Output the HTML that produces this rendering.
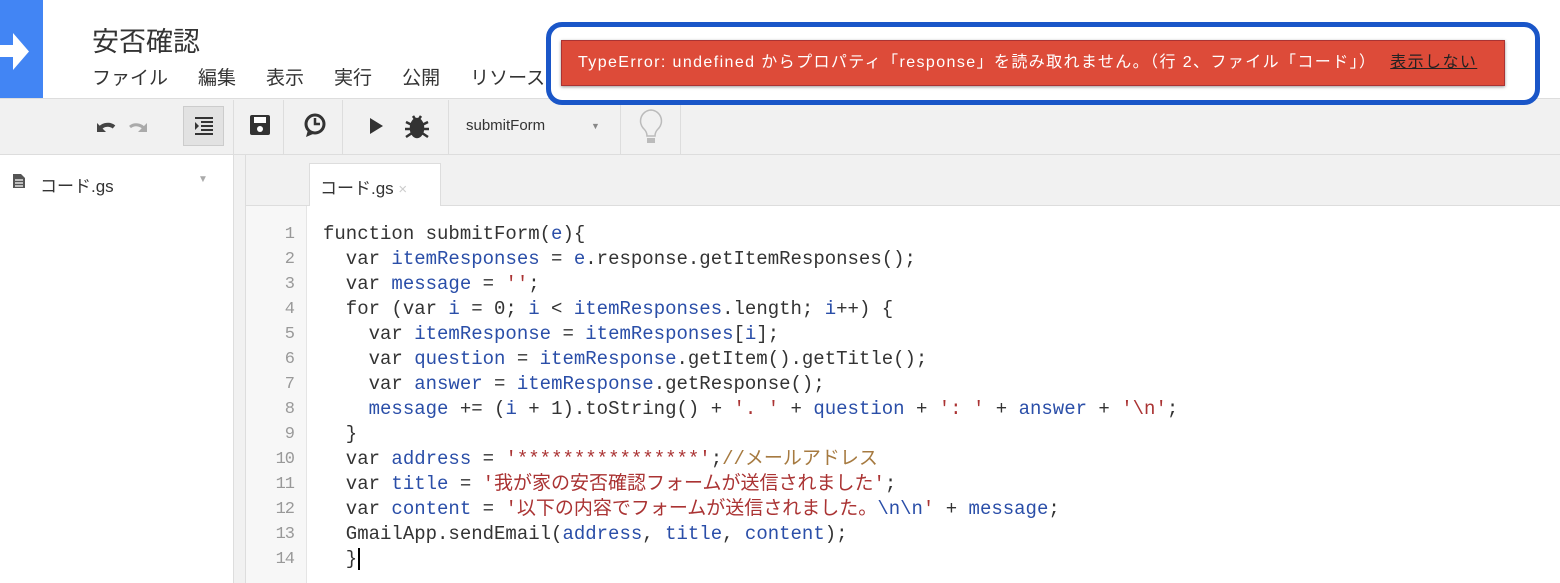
<!DOCTYPE html>
<html><head><meta charset="utf-8"><style>
body{margin:0;width:1560px;height:583px;overflow:hidden;background:#fff;font-family:"Liberation Sans","Noto Sans CJK JP",sans-serif;position:relative}
.abs{position:absolute}
.code{position:absolute;left:323px;top:222px;font-family:"Liberation Mono","Noto Sans CJK JP",monospace;font-size:19px;line-height:25px;color:#333;white-space:pre}
.nums{position:absolute;left:262px;top:222px;width:32px;text-align:right;font-family:"Liberation Mono",monospace;font-size:17px;letter-spacing:-1px;line-height:25px;color:#999;white-space:pre}
.v{color:#2a4ea8}.s{color:#a33}.c{color:#a67a40}
.menu span{margin-right:30px}
</style></head><body>
<!-- logo -->
<div class="abs" style="left:0;top:0;width:43px;height:98px;background:#4285f4"></div>
<svg class="abs" style="left:0;top:30px" width="40" height="45"><path d="M0 15h13V3l16 18.5L13 40V27H0z" fill="#fff"/></svg>
<div class="abs" style="left:92px;top:20px;font-size:27px;color:#333">安否確認</div>
<div class="abs menu" style="left:92px;top:63px;font-size:19px;color:#333;white-space:nowrap"><span>ファイル</span><span>編集</span><span>表示</span><span>実行</span><span>公開</span><span>リソース</span></div>
<!-- toolbar -->
<div class="abs" style="left:0;top:98px;width:1560px;height:57px;background:#f1f1f1;border-top:1px solid #ddd;border-bottom:1px solid #ddd;box-sizing:border-box"></div>
<div class="abs" style="left:183px;top:106px;width:41px;height:40px;background:#e2e2e2;border:1px solid #ccc;box-sizing:border-box"></div>
<div class="abs" style="left:233px;top:100px;width:1px;height:54px;background:#ddd"></div>
<div class="abs" style="left:283px;top:100px;width:1px;height:54px;background:#ddd"></div>
<div class="abs" style="left:342px;top:100px;width:1px;height:54px;background:#ddd"></div>
<div class="abs" style="left:448px;top:100px;width:1px;height:54px;background:#ddd"></div>
<div class="abs" style="left:620px;top:100px;width:1px;height:54px;background:#ddd"></div>
<div class="abs" style="left:680px;top:100px;width:1px;height:54px;background:#ddd"></div>
<svg class="abs" style="left:95px;top:113px" width="70" height="26"><path d="M4 18a9 8 0 0 1 15-4" stroke="#444" stroke-width="4" fill="none"/><path d="M2 10v9h9z" fill="#444"/><path d="M50 18a9 8 0 0 0-15-4" stroke="#aaa" stroke-width="3" fill="none"/><path d="M52 10v9h-9z" fill="#aaa"/></svg>
<svg class="abs" style="left:193px;top:116px" width="22" height="20" fill="#333"><rect x="2" y="1" width="18" height="2"/><rect x="8" y="5" width="12" height="2"/><rect x="8" y="9" width="12" height="2"/><rect x="8" y="13" width="12" height="2"/><rect x="2" y="17" width="18" height="2"/><path d="M2 6l4 4-4 4z"/></svg>
<svg class="abs" style="left:249px;top:114px" width="22" height="22"><rect x="1" y="1" width="20" height="20" rx="2" fill="#333"/><rect x="5" y="3" width="12" height="6" fill="#fff"/><circle cx="11" cy="15" r="3" fill="#fff"/></svg>
<svg class="abs" style="left:302px;top:112px" width="26" height="28"><circle cx="13" cy="12" r="9" fill="none" stroke="#333" stroke-width="3"/><path d="M13 6v6h5" stroke="#333" stroke-width="2.5" fill="none"/><path d="M6 18l-2 7 7-3" fill="#333"/></svg>
<svg class="abs" style="left:368px;top:116px" width="16" height="20"><path d="M2 2l13 8-13 8z" fill="#333"/></svg>
<svg class="abs" style="left:402px;top:110px" width="30" height="32" stroke="#333" stroke-width="2.5"><ellipse cx="15" cy="18" rx="6" ry="9" fill="#333"/><path d="M4 12l6 3M26 12l-6 3M3 19h7M27 19h-7M4 27l6-4M26 27l-6-4M11 6l2 3M19 6l-2 3"/></svg>
<div class="abs" style="left:466px;top:117px;font-size:15px;color:#333">submitForm</div>
<div class="abs" style="left:591px;top:121px;font-size:9px;color:#888">▼</div>
<svg class="abs" style="left:637px;top:108px" width="28" height="38"><path d="M14 2a11 11 0 0 0-7 19c2 2 3 4 3 7h8c0-3 1-5 3-7A11 11 0 0 0 14 2z" fill="none" stroke="#bbb" stroke-width="1.5"/><rect x="10" y="30" width="8" height="5" fill="#bbb"/></svg>
<!-- sidebar -->
<div class="abs" style="left:0;top:155px;width:233px;height:428px;background:#fff;border-right:1px solid #ddd"></div>
<div class="abs" style="left:234px;top:155px;width:11px;height:428px;background:#f1f1f1;border-right:1px solid #ddd"></div>
<svg class="abs" style="left:12px;top:173px" width="14" height="16"><path d="M1 1h8l4 4v10H1z" fill="#555"/><path d="M3 7h8M3 10h8M3 13h8" stroke="#fff" stroke-width="1.2"/></svg>
<div class="abs" style="left:40px;top:172px;font-size:17px;color:#333">コード.gs</div>
<div class="abs" style="left:198px;top:174px;font-size:10px;color:#aaa">▼</div>
<!-- editor tabs -->
<div class="abs" style="left:246px;top:155px;width:1314px;height:50px;background:#f1f1f1;border-bottom:1px solid #ddd"></div>
<div class="abs" style="left:309px;top:163px;width:132px;height:43px;background:#fff;border:1px solid #ddd;border-bottom:none;box-sizing:border-box"></div>
<div class="abs" style="left:320px;top:174px;font-size:17px;color:#333">コード.gs <span style="color:#ccc;font-size:15px">×</span></div>
<!-- gutter -->
<div class="abs" style="left:246px;top:206px;width:60px;height:377px;background:#f7f7f7;border-right:1px solid #e5e5e5"></div>
<div class="nums">1
2
3
4
5
6
7
8
9
10
11
12
13
14</div>
<div class="code">function submitForm(<span class="v">e</span>){
  var <span class="v">itemResponses</span> = <span class="v">e</span>.response.getItemResponses();
  var <span class="v">message</span> = <span class="s">''</span>;
  for (var <span class="v">i</span> = 0; <span class="v">i</span> &lt; <span class="v">itemResponses</span>.length; <span class="v">i</span>++) {
    var <span class="v">itemResponse</span> = <span class="v">itemResponses</span>[<span class="v">i</span>];
    var <span class="v">question</span> = <span class="v">itemResponse</span>.getItem().getTitle();
    var <span class="v">answer</span> = <span class="v">itemResponse</span>.getResponse();
    <span class="v">message</span> += (<span class="v">i</span> + 1).toString() + <span class="s">'. '</span> + <span class="v">question</span> + <span class="s">': '</span> + <span class="v">answer</span> + <span class="s">'\n'</span>;
  }
  var <span class="v">address</span> = <span class="s">'****************'</span>;<span class="c">//メールアドレス</span>
  var <span class="v">title</span> = <span class="s">'我が家の安否確認フォームが送信されました'</span>;
  var <span class="v">content</span> = <span class="s">'以下の内容でフォームが送信されました。<span class="v">\n\n</span>'</span> + <span class="v">message</span>;
  GmailApp.sendEmail(<span class="v">address</span>, <span class="v">title</span>, <span class="v">content</span>);
  }<span style="border-left:2px solid #000;margin-left:1px"></span></div>
<!-- error -->
<div class="abs" style="left:546px;top:22px;width:994px;height:83px;border:5px solid #1a56c8;border-radius:16px;background:#fff;box-sizing:border-box"></div>
<div class="abs" style="left:561px;top:40px;width:944px;height:46px;background:#dd4b39;border:1px solid #a33;box-shadow:0 1px 3px rgba(0,0,0,.4);box-sizing:border-box;color:#fff;font-size:16px;letter-spacing:1.4px;line-height:44px;padding-left:16px;white-space:nowrap">TypeError: undefined からプロパティ「response」を読み取れません。（行 2、ファイル「コード」） <span style="text-decoration:underline;color:#222;margin-left:8px">表示しない</span></div>
</body></html>
